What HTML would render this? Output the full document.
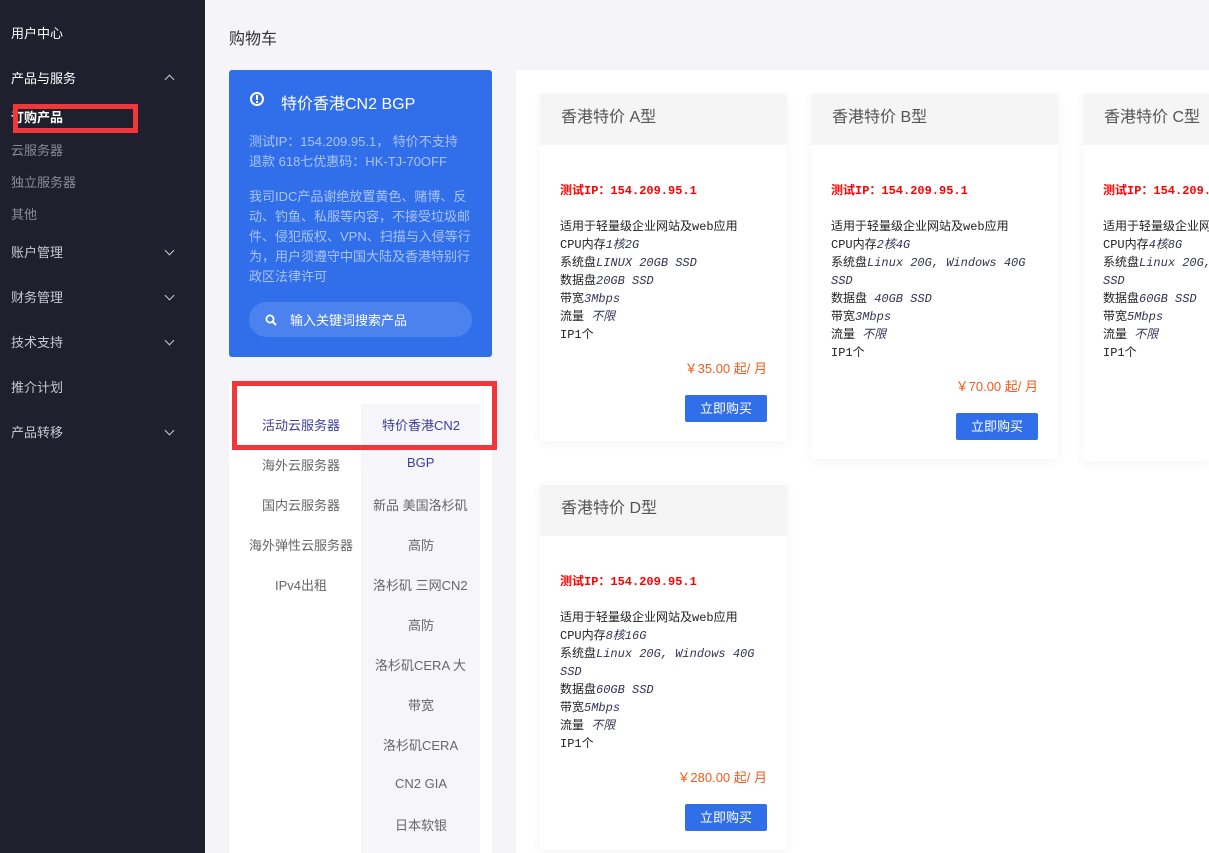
<!DOCTYPE html>
<html><head><meta charset="utf-8"><style>
*{margin:0;padding:0;box-sizing:border-box}
html,body{width:1209px;height:853px;overflow:hidden}
body{background:#f5f5f9;font-family:"Liberation Sans","Noto Sans CJK SC",sans-serif;position:relative}
.side{position:absolute;left:0;top:0;width:205px;height:853px;background:#1f1f2d}
.side div{position:absolute;left:11px;font-size:13px;color:#fff}
.side .sub{color:#8a8b99}
.side .ar{position:absolute;left:166px;width:7px;height:7px;border-right:1.5px solid #ccc;border-bottom:1.5px solid #ccc;transform:rotate(45deg)}
.side .up{transform:rotate(-135deg)}
.red{position:absolute;border:5px solid #f2373a}
.title{position:absolute;left:229px;top:25px;font-size:16px;color:#333}
.blue{position:absolute;left:229px;top:70px;width:263px;height:287px;background:#316fea;border-radius:3px;color:#fff}
.blue .h{position:absolute;left:52px;top:20px;font-size:16px}
.blue .p{position:absolute;left:20px;font-size:13px;line-height:20px;color:#a9c3f6;width:230px}
.search{position:absolute;left:20px;top:232px;width:223px;height:35px;border-radius:18px;background:#4b82ee;font-size:13px;color:#fff;padding:8px 0 0 41px}
.cats{position:absolute;left:229px;top:382px;width:263px;height:471px;background:#fff}
.rc{position:absolute;left:132px;top:22px;width:119px;height:449px;background:#f6f6fa}
.cats span{position:absolute;font-size:13px;color:#666;text-align:center;white-space:nowrap}
.panel{position:absolute;left:516px;top:70px;width:693px;height:783px;background:#fff}
.card{position:absolute;width:247px;background:#fff;box-shadow:0 2px 10px rgba(0,0,0,.05)}
.card .hd{height:51px;background:#f5f5f5;font-size:16px;color:#555;padding:9px 0 0 21px}
.card .bd{padding:37px 20px 19px 20px;font-family:"Liberation Mono","Noto Sans CJK SC",monospace;font-size:12px;line-height:18px;color:#222}
.ip{color:#f00;font-weight:bold;margin-bottom:18px}
.bd i{color:#335}
.price{text-align:right;font-family:"Liberation Sans","Noto Sans CJK SC",sans-serif;font-size:13px;color:#f25a1a;margin-top:16px}
.btn{margin:17px 0 0 auto;width:82px;height:27px;background:#316fea;color:#fff;border-radius:2px;font-family:"Liberation Sans","Noto Sans CJK SC",sans-serif;font-size:13px;text-align:center;line-height:27px}
</style></head><body>
<div class="side">
<div style="top:23px">用户中心</div>
<div style="top:68px">产品与服务</div><i class="ar up" style="top:76px"></i>
<div style="top:107px;font-weight:bold">订购产品</div>
<div class="sub" style="top:140px">云服务器</div>
<div class="sub" style="top:172px">独立服务器</div>
<div class="sub" style="top:204px">其他</div>
<div class="sub" style="top:242px;color:#c8c8d0">账户管理</div><i class="ar" style="top:247px"></i>
<div class="sub" style="top:287px;color:#c8c8d0">财务管理</div><i class="ar" style="top:292px"></i>
<div class="sub" style="top:332px;color:#c8c8d0">技术支持</div><i class="ar" style="top:337px"></i>
<div class="sub" style="top:377px;color:#c8c8d0">推介计划</div>
<div class="sub" style="top:422px;color:#c8c8d0">产品转移</div><i class="ar" style="top:427px"></i>
</div>
<div class="red" style="left:13px;top:104px;width:125px;height:29px"></div>
<div class="title">购物车</div>
<div class="blue">
<svg style="position:absolute;left:20px;top:21px" width="16" height="16" viewBox="0 0 16 16"><circle cx="8" cy="8" r="6" fill="none" stroke="#fff" stroke-width="2"/><rect x="7" y="4" width="2" height="5" fill="#fff"/><rect x="7" y="10" width="2" height="2" fill="#fff"/></svg>
<div class="h">特价香港CN2 BGP</div>
<div class="p" style="top:62px">测试IP：154.209.95.1，&nbsp;特价不支持<br>退款 618七优惠码：HK-TJ-70OFF</div>
<div class="p" style="top:117px">我司IDC产品谢绝放置黄色、赌博、反动、钓鱼、私服等内容，不接受垃圾邮件、侵犯版权、VPN、扫描与入侵等行为，用户须遵守中国大陆及香港特别行政区法律许可</div>
<div class="search"><svg style="position:absolute;left:16px;top:12px" width="12" height="12" viewBox="0 0 12 12"><circle cx="5" cy="5" r="3.6" fill="none" stroke="#fff" stroke-width="1.8"/><path d="M7.5 7.5L11 11" stroke="#fff" stroke-width="2"/></svg>输入关键词搜索产品</div>
</div>
<div class="cats">
<div class="rc"></div>
<span style="left:33px;top:33px;color:#3c3ca0">活动云服务器</span>
<span style="left:153px;top:33px;color:#3c3ca0">特价香港CN2</span>
<span style="left:33px;top:73px">海外云服务器</span>
<span style="left:178px;top:73px;color:#3c3ca0">BGP</span>
<span style="left:33px;top:113px">国内云服务器</span>
<span style="left:144px;top:113px">新品 美国洛杉矶</span>
<span style="left:20px;top:153px">海外弹性云服务器</span>
<span style="left:179px;top:153px">高防</span>
<span style="left:46px;top:193px">IPv4出租</span>
<span style="left:144px;top:193px">洛杉矶 三网CN2</span>
<span style="left:179px;top:233px">高防</span>
<span style="left:146px;top:273px">洛杉矶CERA 大</span>
<span style="left:179px;top:313px">带宽</span>
<span style="left:154px;top:353px">洛杉矶CERA</span>
<span style="left:166px;top:394px">CN2 GIA</span>
<span style="left:166px;top:433px">日本软银</span>
</div>
<div class="red" style="left:232px;top:381px;width:265px;height:69px"></div>
<div class="panel"></div>
<div class="card" style="left:540px;top:94px"><div class="hd">香港特价 A型</div><div class="bd">
<div class="ip">测试IP：154.209.95.1</div>
适用于轻量级企业网站及web应用<br>CPU内存<i>1核2G</i><br>系统盘<i>LINUX 20GB SSD</i><br>数据盘<i>20GB SSD</i><br>带宽<i>3Mbps</i><br>流量 <i>不限</i><br>IP1个
<div class="price">￥35.00 起/ 月</div><div class="btn">立即购买</div></div></div>
<div class="card" style="left:811px;top:94px"><div class="hd">香港特价 B型</div><div class="bd">
<div class="ip">测试IP：154.209.95.1</div>
适用于轻量级企业网站及web应用<br>CPU内存<i>2核4G</i><br>系统盘<i>Linux 20G, Windows 40G</i><br><i>SSD</i><br>数据盘 <i>40GB SSD</i><br>带宽<i>3Mbps</i><br>流量 <i>不限</i><br>IP1个
<div class="price">￥70.00 起/ 月</div><div class="btn">立即购买</div></div></div>
<div class="card" style="left:1083px;top:94px;height:367px;width:126px;overflow:hidden"><div class="hd" style="white-space:nowrap">香港特价 C型</div><div class="bd" style="white-space:nowrap">
<div class="ip">测试IP：154.209.95.1</div>
适用于轻量级企业网站及web应用<br>CPU内存<i>4核8G</i><br>系统盘<i>Linux 20G, Windows 40G</i><br><i>SSD</i><br>数据盘<i>60GB SSD</i><br>带宽<i>5Mbps</i><br>流量 <i>不限</i><br>IP1个</div></div>
<div class="card" style="left:540px;top:485px"><div class="hd">香港特价 D型</div><div class="bd">
<div class="ip">测试IP：154.209.95.1</div>
适用于轻量级企业网站及web应用<br>CPU内存<i>8核16G</i><br>系统盘<i>Linux 20G, Windows 40G</i><br><i>SSD</i><br>数据盘<i>60GB SSD</i><br>带宽<i>5Mbps</i><br>流量 <i>不限</i><br>IP1个
<div class="price">￥280.00 起/ 月</div><div class="btn">立即购买</div></div></div>
</body></html>
